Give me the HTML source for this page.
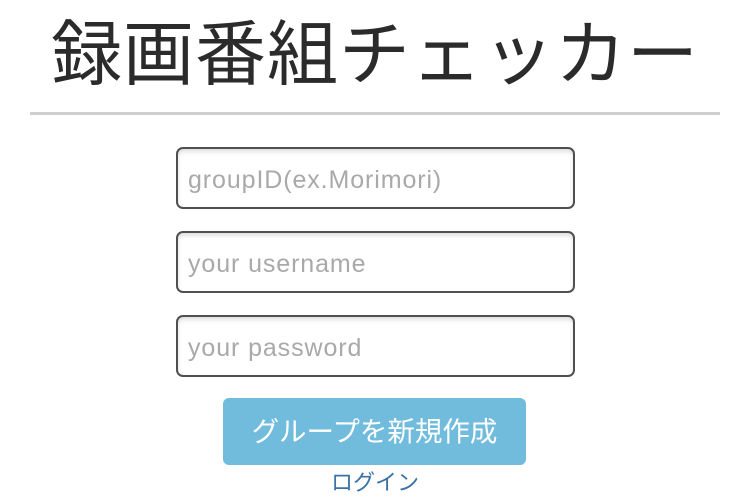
<!DOCTYPE html>
<html><head><meta charset="utf-8"><style>
body{margin:0;width:750px;height:500px;background:#fff;overflow:hidden;font-family:"Liberation Sans","Noto Sans CJK JP",sans-serif;position:relative}
h1{position:absolute;top:9px;left:0;width:750px;margin:0;text-align:center;font-weight:400;font-size:71px;line-height:94px;color:#2b2b2b;letter-spacing:1px}
.hr{position:absolute;left:30px;top:112px;width:690px;height:3px;background:#cfcfcf}
.in{position:absolute;left:176px;height:58px;border:2px solid #505050;border-radius:7px;box-shadow:inset 0 3px 4px rgba(0,0,0,.12);color:#a9a9a9;font-size:25px;letter-spacing:0.9px;line-height:62px;padding-left:10px;box-sizing:content-box;width:385px}
.btn{position:absolute;left:223px;top:398px;width:303px;height:67px;background:#71bcdc;border-radius:6px;color:#fff;font-size:27.5px;line-height:67px;text-align:center}
.lk{position:absolute;left:0;width:750px;top:468px;text-align:center;color:#3d72a6;font-size:22px;line-height:30px}
</style></head><body>
<h1>録画番組チェッカー</h1>
<div class="hr"></div>
<div class="in" style="top:147px">groupID(ex.Morimori)</div>
<div class="in" style="top:231px">your username</div>
<div class="in" style="top:315px">your password</div>
<div class="btn">グループを新規作成</div>
<div class="lk">ログイン</div>
</body></html>
